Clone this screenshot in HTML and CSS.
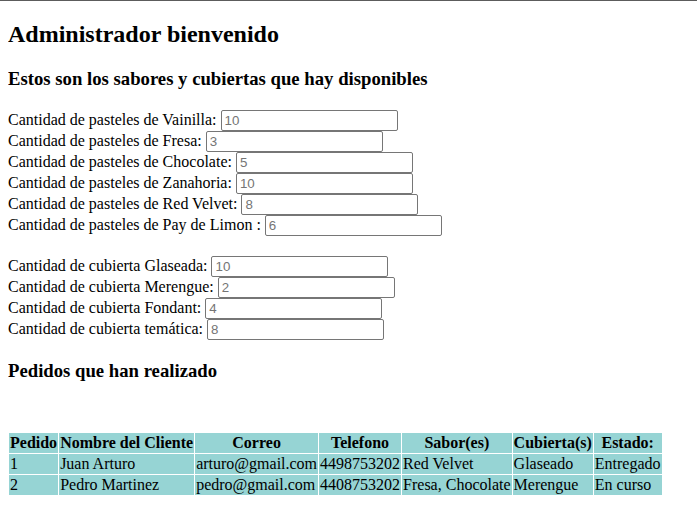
FILE: index.html
```html
<!DOCTYPE html>
<html lang="es">
<head>
<meta charset="utf-8">
<title>Administrador</title>
<link rel="stylesheet" href="styles.css">
</head>
<body>
<h1 class="title">Administrador bienvenido</h1>
<h3 class="subtitle">Estos son los sabores y cubiertas que hay disponibles</h3>
<div class="stock">
  <div class="row"><label>Cantidad de pasteles de Vainilla:</label><input type="text" placeholder="10"></div>
  <div class="row"><label>Cantidad de pasteles de Fresa:</label><input type="text" placeholder="3"></div>
  <div class="row"><label>Cantidad de pasteles de Chocolate:</label><input type="text" placeholder="5"></div>
  <div class="row"><label>Cantidad de pasteles de Zanahoria:</label><input type="text" placeholder="10"></div>
  <div class="row"><label>Cantidad de pasteles de Red Velvet:</label><input type="text" placeholder="8"></div>
  <div class="row"><label>Cantidad de pasteles de Pay de Limon :</label><input type="text" placeholder="6"></div>
</div>
<div class="stock second">
  <div class="row"><label>Cantidad de cubierta Glaseada:</label><input type="text" placeholder="10"></div>
  <div class="row"><label>Cantidad de cubierta Merengue:</label><input type="text" placeholder="2"></div>
  <div class="row"><label>Cantidad de cubierta Fondant:</label><input type="text" placeholder="4"></div>
  <div class="row"><label>Cantidad de cubierta temática:</label><input type="text" placeholder="8"></div>
</div>
<h3 class="subtitle orders-title">Pedidos que han realizado</h3>
<table class="orders">
  <thead>
    <tr><th>Pedido</th><th>Nombre del Cliente</th><th>Correo</th><th>Telefono</th><th>Sabor(es)</th><th>Cubierta(s)</th><th>Estado:</th></tr>
  </thead>
  <tbody>
    <tr><td>1</td><td>Juan Arturo</td><td>arturo@gmail.com</td><td>4498753202</td><td>Red Velvet</td><td>Glaseado</td><td>Entregado</td></tr>
    <tr><td>2</td><td>Pedro Martinez</td><td>pedro@gmail.com</td><td>4408753202</td><td>Fresa, Chocolate</td><td>Merengue</td><td>En curso</td></tr>
  </tbody>
</table>
</body>
</html>
```
FILE: styles.css
```css
html {
  border-top: 1px solid #5c5c5c;
}
body {
  margin: 0 8px 8px;
  padding: 0;
  font-family: "Liberation Serif", "Times New Roman", serif;
  font-size: 16px;
  color: #000;
  background: #fff;
}
.title {
  font-size: 24px;
  font-weight: bold;
  margin: 19.92px 0;
}
.subtitle {
  font-size: 18.72px;
  font-weight: bold;
  margin: 18.72px 0;
}
.stock {
  padding-top: 1px;
}
.stock .row {
  display: flex;
  align-items: baseline;
  gap: 4px;
  height: 21px;
}
.stock.second {
  margin-top: 19px;
}
.stock input {
  box-sizing: border-box;
  width: 177px;
  height: 21px;
  margin: 0;
  padding: 0 3px;
  border: 1px solid #767676;
  border-radius: 2px;
  font-family: "Liberation Sans", Arial, sans-serif;
  font-size: 13.333px;
  background: #fff;
}
.stock input::placeholder {
  color: #757575;
}
.orders-title {
  margin-top: 20px;
}
.orders {
  margin-top: 50px;
  border-collapse: separate;
  border-spacing: 1px;
}
.orders th,
.orders td {
  background: #96d4d4;
  padding: 1px;
}
.orders th {
  text-align: center;
  font-weight: bold;
}
.orders td {
  text-align: left;
}
```
